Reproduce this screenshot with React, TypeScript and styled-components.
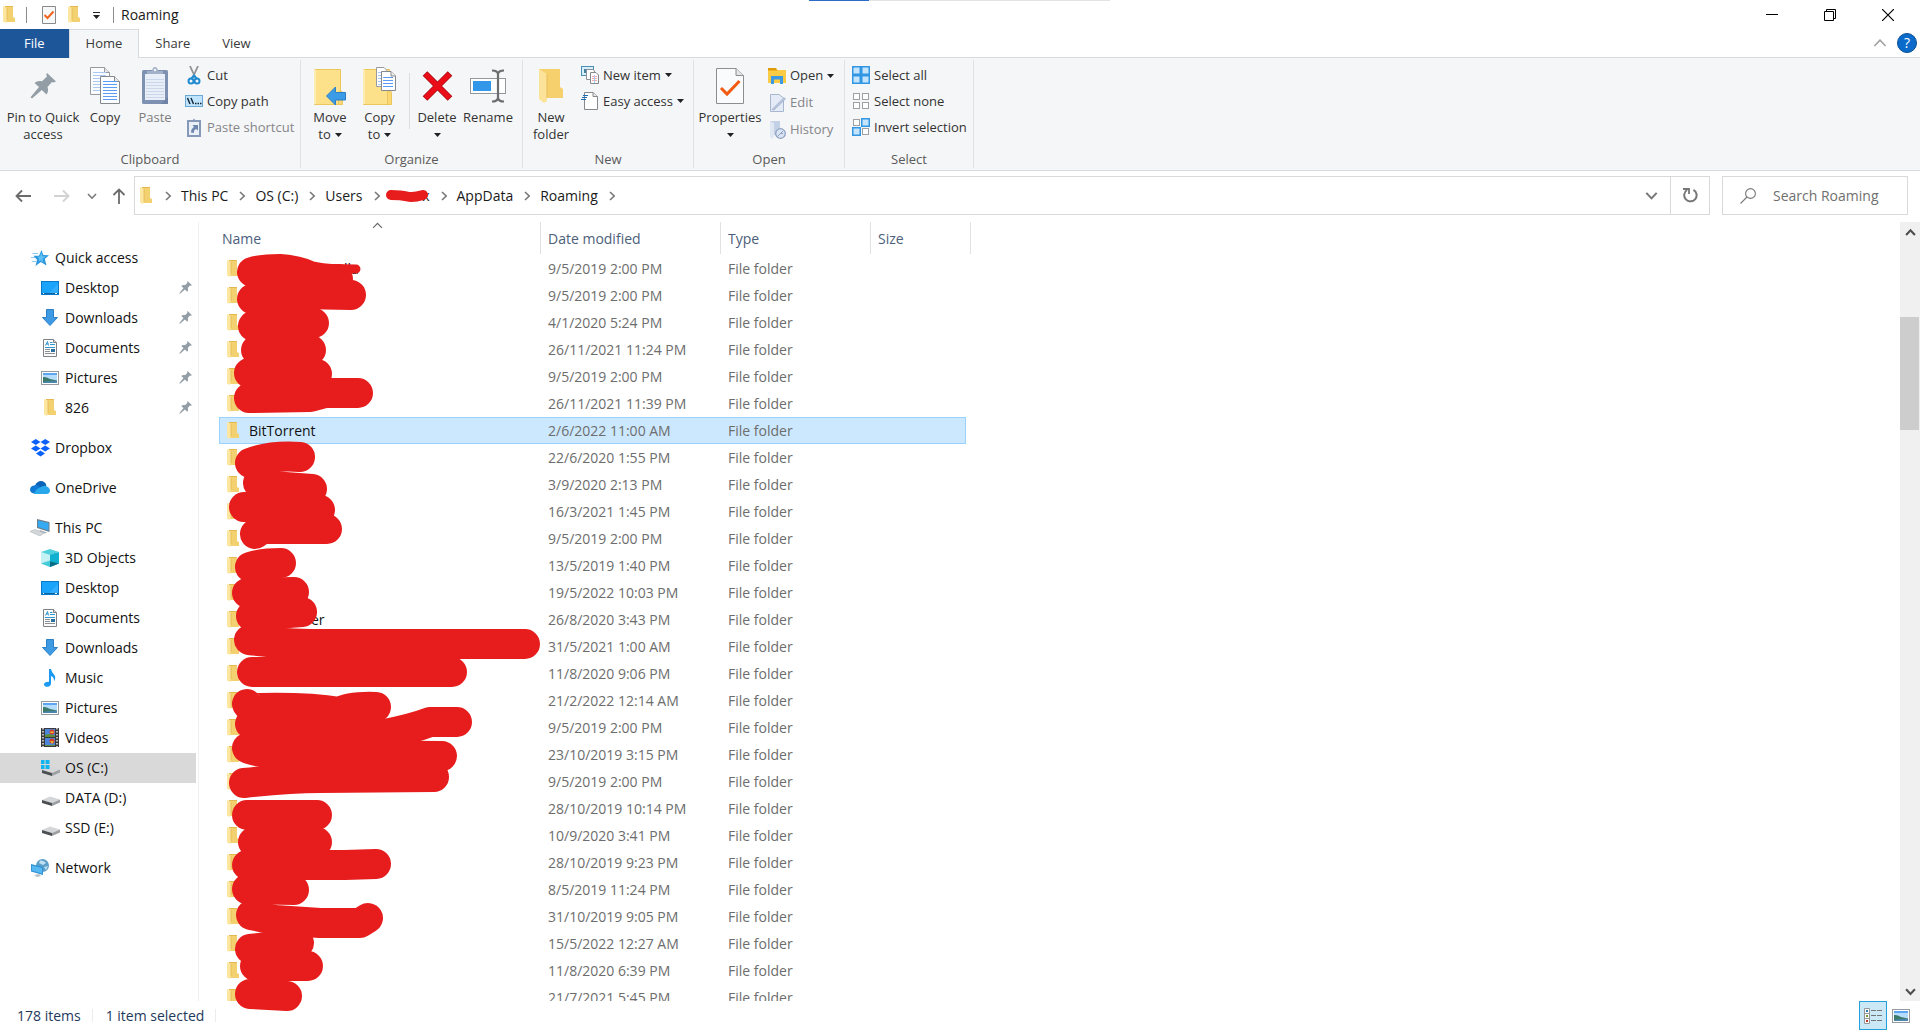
import React from "react";
import styled, { createGlobalStyle, css } from "styled-components";

const GlobalStyle = createGlobalStyle`
  *, *::before, *::after { box-sizing: border-box; }
  body { margin: 0; background: #fff; }
  button, input { font: inherit; color: inherit; }
`;

/* ---------- icons ---------- */

type IconProps = { w?: number; h?: number };

const FolderSmall = () => (
  <svg width="12" height="17" viewBox="0 0 12 17" aria-hidden="true">
    <path d="M2 0H10V11L12 12V16H2Z" fill="#f3d070" />
    <path d="M2 0H10V1H2Z" fill="#e3b84f" />
    <path d="M0 0L4 2V14L2.5 17L0 15.5Z" fill="#fde6a0" />
    <path d="M4 2V14" stroke="#d9ae45" strokeWidth=".6" />
  </svg>
);

const PropsSmall = () => (
  <svg width="14" height="18" viewBox="0 0 14 18" aria-hidden="true">
    <path d="M.5.5H13.5V17.5H.5Z" fill="#f7f8f9" stroke="#8a8a8a" />
    <path d="M2.500 9L5.500 12L11.500 5.500" fill="none" stroke="#f0641e" strokeWidth="2" />
  </svg>
);

const Triangle = ({ w = 7, h = 4 }: IconProps) => (
  <svg width={w} height={h} viewBox="0 0 7 4" aria-hidden="true">
    <path d="M0 0H7L3.5 4Z" fill="#222" />
  </svg>
);

const Chevron = ({ dir, size = 10, color = "#777", weight = 1.6 }: { dir: "up" | "down" | "right"; size?: number; color?: string; weight?: number }) => {
  const d = { up: "M1 7.2L5 3L9 7.2", down: "M1 3L5 7.2L9 3", right: "M3 1L7.2 5L3 9" }[dir];
  return (
    <svg width={size} height={size} viewBox="0 0 10 10" aria-hidden="true">
      <path d={d} fill="none" stroke={color} strokeWidth={weight} />
    </svg>
  );
};

const Pin = ({ w = 26, h = 26 }: IconProps) => (
  <svg width={w} height={h} viewBox="0 0 26 26" aria-hidden="true">
    <path d="M17 0L26 8.500L23.500 9.500L22 9L17.500 14C18.500 16.500 18.200 19.500 16.500 21.500L11.800 17L2 25.500L.5 24.300L9 14L4.500 10C6.500 8 9.500 7.500 12 8.300L17 3.500L16.200 1.800Z" fill="#929da5" />
  </svg>
);

const TextLines = ({ x, y, n, w, color }: { x: number; y: number; n: number; w: number; color: string }) => (
  <>
    {Array.from({ length: n }, (_, i) => (
      <path key={i} d={`M${x} ${y + i * 3}h${w}`} stroke={color} />
    ))}
  </>
);

const CopyIcon = () => (
  <svg width="30" height="37" viewBox="0 0 30 37" aria-hidden="true">
    <path d="M.5.5H14.500L19.500 5.500V27.500H.5Z" fill="#fbfcfe" stroke="#959a9f" />
    <path d="M14.500.5V5.500H19.500" fill="#e8e8e8" stroke="#959a9f" />
    <TextLines x={3} y={5.5} n={7} w={13} color="#a9c8f5" />
    <path d="M10.500 9.500H24.500L29.500 14.500V36.500H10.500Z" fill="#fbfcfe" stroke="#85898d" />
    <path d="M24.500 9.500V14.500H29.500" fill="#e8e8e8" stroke="#85898d" />
    <TextLines x={13} y={14.5} n={7} w={14} color="#5b9bf3" />
  </svg>
);

const PasteIcon = () => (
  <svg width="26" height="37" viewBox="0 0 26 37" aria-hidden="true">
    <rect y="3" width="26" height="34" rx="1.500" fill="#7f91b2" />
    <rect x="3" y="7" width="20" height="26" fill="#e9eff9" />
    <TextLines x={4} y={12.5} n={7} w={18} color="#cbd7e8" />
    <path d="M5 7V4H10Q10.500 0 13 0Q15.500 0 16 4H21V7Z" fill="#a4b2c9" />
    <circle cx="13" cy="3" r="1.200" fill="#f5f6f7" />
    <path d="M19 37L26 30V37Z" fill="#6f82a5" />
  </svg>
);

const ScissorsIcon = () => (
  <svg width="18" height="19" viewBox="0 0 18 19" aria-hidden="true">
    <path d="M5 0L10.500 12M13 0L7.500 12" stroke="#8d9297" strokeWidth="1.800" />
    <circle cx="6" cy="15" r="2.500" fill="none" stroke="#1f8bd0" strokeWidth="2" />
    <circle cx="12" cy="15" r="2.500" fill="none" stroke="#1f8bd0" strokeWidth="2" />
    <path d="M6 13L9 9.500L12 13" fill="none" stroke="#1f8bd0" strokeWidth="2" />
  </svg>
);

const CopyPathIcon = () => (
  <svg width="18" height="12" viewBox="0 0 18 12" aria-hidden="true">
    <rect x=".5" y=".5" width="17" height="11" fill="#bfe4fb" stroke="#6ba9d4" />
    <path d="M2.500 3L5 9M6 3L8.500 9" stroke="#152433" strokeWidth="1.400" />
    <path d="M10 8.500h1.500M12.500 8.500h1.500M15 8.500h1.500" stroke="#152433" strokeWidth="1.300" />
  </svg>
);

const PasteShortcutIcon = () => (
  <svg width="14" height="19" viewBox="0 0 14 19" aria-hidden="true">
    <rect x="1" y="3" width="12" height="15" fill="#eaf0f8" stroke="#8799b8" strokeWidth="2" />
    <path d="M4 4V2H6Q7 -.5 8 2H10V4Z" fill="#8799b8" />
    <path d="M4 14.500Q4 10.500 7 9L5.500 7H11V12.500L9 11Q6.500 12 7 15Z" fill="#6f87ae" />
  </svg>
);

const BigFolder = ({ children, w }: { children?: React.ReactNode; w: number }) => (
  <svg width={w} height="38" viewBox={`0 0 ${w} 38`} aria-hidden="true">
    <path d="M.5 2.500H26.500V37.500H.5Z" fill="#fce08a" stroke="#ebc65c" />
    <path d="M1 2.500V37" stroke="#fdebb2" strokeWidth="2" />
    <path d="M24.500 37V26Q24.500 24 26.500 24Q28.500 24 28.500 26V37.500H20" fill="#fbd873" stroke="#ebc65c" />
    {children}
  </svg>
);

const MoveIcon = () => (
  <BigFolder w={32}>
    <path d="M12.500 29L21.500 20V25.500H31.500V33H21.500V38Z" fill="#3c9be6" stroke="#2a7fc6" />
  </BigFolder>
);

const CopyToIcon = () => (
  <BigFolder w={33}>
    <path d="M13.500.5H21L25 4.500V19.500H13.500Z" fill="#fff" stroke="#959a9f" />
    <TextLines x={15} y={5.5} n={5} w={5} color="#a9c8f5" />
    <path d="M18.500 4.500H28L32.500 9V23.500H18.500Z" fill="#fff" stroke="#85898d" />
    <path d="M28 4.500V9H32.500" fill="#eee" stroke="#85898d" />
    <TextLines x={20} y={10.5} n={4} w={10} color="#5b9bf3" />
  </BigFolder>
);

const DeleteIcon = () => (
  <svg width="31" height="32" viewBox="0 0 31 32" aria-hidden="true">
    <path d="M3 3.500L28 28.500M28 3.500L3 28.500" stroke="#a80c14" strokeWidth="6.500" />
    <path d="M3.500 4L27.500 28M27.500 4L3.500 28" stroke="#ea0d18" strokeWidth="5" />
  </svg>
);

const RenameIcon = () => (
  <svg width="36" height="34" viewBox="0 0 36 34" aria-hidden="true">
    <rect x=".5" y="9.500" width="35" height="15" fill="#fff" stroke="#94989c" />
    <rect x="3" y="12" width="18" height="10" fill="#3297e8" />
    <path d="M22 1.500Q27.500 1.500 28 5Q28.500 1.500 34 1.500M22 32.500Q27.500 32.500 28 29Q28.500 32.500 34 32.500M28 4V30" fill="none" stroke="#6d6d6d" strokeWidth="2.200" />
  </svg>
);

const NewFolderIcon = () => (
  <svg width="25" height="36" viewBox="0 0 25 36" aria-hidden="true">
    <path d="M0 1H21V19L24 21V30H7Z" fill="#f5d06c" />
    <path d="M0 1L8 6V33L5 35L0 31Z" fill="#fde39a" />
    <path d="M8 6V30" stroke="#e7bd55" />
  </svg>
);

const NewItemIcon = () => (
  <svg width="18" height="18" viewBox="0 0 18 18" aria-hidden="true">
    <rect x=".5" y=".5" width="12" height="9" fill="#d6effb" stroke="#4c8db5" />
    <path d="M3 7V3H6V7Z" fill="#46809f" />
    <path d="M5.500 3.500H12L13.500 5V13.500H5.500Z" fill="#fff" stroke="#8d9195" />
    <path d="M9.500 6.500H15L17.500 9V17.500H9.500Z" fill="#fff" stroke="#85898d" />
    <path d="M11 10.500H16M11 12.500H16M11 14.500H16" stroke="#f0a9a5" />
    <path d="M13.500 9V17" stroke="#a9c8f5" />
  </svg>
);

const EasyAccessIcon = () => (
  <svg width="18" height="18" viewBox="0 0 18 18" aria-hidden="true">
    <path d="M3.500.5H12L16.500 4.500V17.500H3.500Z" fill="#fff" stroke="#85898d" />
    <path d="M12 .5V4.500H16.500" fill="#e8e8e8" stroke="#85898d" />
    <path d="M2 3.500H7M1 5.500H6M0 7.500H5" stroke="#1b6fb5" />
  </svg>
);

const PropertiesIcon = () => (
  <svg width="28" height="36" viewBox="0 0 28 36" aria-hidden="true">
    <path d="M.5.5H20L27.500 7.500V35.500H.5Z" fill="#fafbfc" stroke="#8b8f93" />
    <path d="M20 .5V7.500H27.500" fill="#e2e4e6" stroke="#8b8f93" />
    <path d="M5 20L11 26L23.500 13" fill="none" stroke="#f35b12" strokeWidth="3" />
  </svg>
);

const OpenIcon = () => (
  <svg width="18" height="16" viewBox="0 0 18 16" aria-hidden="true">
    <path d="M0 0H8L9.500 2H18V15H0Z" fill="#fccb45" />
    <path d="M0 0H8L9 2.500H0Z" fill="#e19b09" />
    <path d="M3 16V8H15V16H12V11.500H6V16Z" fill="#3c99e4" />
  </svg>
);

const EditIcon = () => (
  <svg width="18" height="18" viewBox="0 0 18 18" aria-hidden="true">
    <path d="M2.500.5H11L15.500 4V17.500H2.500Z" fill="#e4ebf6" stroke="#a8b6cf" />
    <path d="M4 15.500L16 3.500L17.500 5L6 16Z" fill="#b9c6dd" stroke="#93a5c6" strokeWidth=".6" />
  </svg>
);

const HistoryIcon = () => (
  <svg width="18" height="18" viewBox="0 0 18 18" aria-hidden="true">
    <path d="M2 0H12V14H2Z" fill="#c3d0e5" />
    <path d="M2 0L6 2V15L4.500 18L2 16Z" fill="#dfe7f3" />
    <circle cx="12.500" cy="12.500" r="4.800" fill="#dbe4f2" stroke="#8fa2c5" strokeWidth="1.300" />
    <path d="M9.500 15.500L15 10M12.500 12.500H15" stroke="#8fa2c5" />
  </svg>
);

const SelectGrid = ({ on }: { on: [boolean, boolean, boolean, boolean] }) => {
  const all = on.every(Boolean);
  return (
    <svg width="18" height="18" viewBox="0 0 18 18" aria-hidden="true">
      {all && <path d="M0 0H18V18H0Z" fill="#3296e3" />}
      {on.map((sel, i) => {
        const x = (i % 2) * 9;
        const y = Math.floor(i / 2) * 9;
        if (sel) {
          return <rect key={i} x={x + 0.75} y={y + 0.75} width="7.500" height="7.500" fill="#c3e4fc" stroke="#3296e3" strokeWidth="1.500" />;
        }
        return <rect key={i} x={x + 1.5} y={y + 1.5} width="6" height="6" fill="#fff" stroke="#9da1a5" />;
      })}
    </svg>
  );
};

const QuickAccessIcon = () => (
  <svg width="18" height="16" viewBox="0 0 18 16" aria-hidden="true">
    <path d="M10.500 0L12.300 5L18 5.200L13.800 9L15.500 15.500L9.800 12L4.500 16L6 9.700L2.500 5.800H8Z" fill="#2b97dd" />
    <path d="M10.300 2L11.500 6.200L15 6.500L11.500 9L12.500 12.500L9.500 10.500L7.500 11.500L8 8.500L6 6.800L9 6.500Z" fill="#5fc0f6" />
    <path d="M1.500 3.500H7M0 7.500H4M1 11.500H5" stroke="#8cc8ef" />
  </svg>
);

const DesktopIcon = () => (
  <svg width="18" height="14" viewBox="0 0 18 14" aria-hidden="true">
    <rect x=".5" y=".5" width="17" height="13" fill="#19a3fb" stroke="#0b79c8" />
    <path d="M8 12L17 3V12Z" fill="#33aefc" />
    <path d="M1 12.500H17" stroke="#0c65a6" />
    <path d="M2 12.500H3M14 12.500H16" stroke="#fff" />
  </svg>
);

const DownloadsIcon = () => (
  <svg width="16" height="17" viewBox="0 0 16 17" aria-hidden="true">
    <path d="M4.500.5H11.500V8.500H15.500L8 16.500L.5 8.500H4.500Z" fill="#3f9ae4" stroke="#2b7fc7" />
  </svg>
);

const DocumentsIcon = () => (
  <svg width="14" height="18" viewBox="0 0 14 18" aria-hidden="true">
    <path d="M.5.5H10.500L13.500 3.500V17.500H.5Z" fill="#fcfcfc" stroke="#7e8286" />
    <path d="M10.500.5V3.500H13.500" fill="#ddd" stroke="#7e8286" />
    <path d="M2.500 6.500L4.500 2.500L5.500 6.500M3 5H5M7 3.500H9.500M7 5.500H12M2 8.500H12" fill="none" stroke="#2f95cf" />
    <path d="M2 10.500H7M2 12.500H7M2 14.500H12" stroke="#8a8f94" />
    <rect x="8" y="10" width="4" height="3" fill="#2a6f9d" />
  </svg>
);

const PicturesIcon = () => (
  <svg width="18" height="14" viewBox="0 0 18 14" aria-hidden="true">
    <rect x=".5" y=".5" width="17" height="13" fill="#fff" stroke="#969a9e" />
    <rect x="2" y="2" width="14" height="10" fill="#b5dcfb" />
    <path d="M2 2H16V4H2Z" fill="#5da4f3" />
    <path d="M2 6Q5 5.500 9 8L16 9.500V12H2Z" fill="#3e7a6c" />
    <path d="M2 11Q9 9.500 16 10V12H2Z" fill="#4a86ad" />
  </svg>
);

const DropboxIcon = () => (
  <svg width="19" height="18" viewBox="0 0 19 18" aria-hidden="true">
    <path d="M4.800 0L9.500 3L4.800 6L0 3ZM14.200 0L19 3L14.200 6L9.500 3ZM4.800 6.500L9.500 9.500L4.800 12.500L0 9.500ZM14.200 6.500L19 9.500L14.200 12.500L9.500 9.500ZM9.500 11.500L14 14.500L9.500 17.500L5 14.500Z" fill="#0b62fb" />
  </svg>
);

const OneDriveIcon = () => (
  <svg width="20" height="13" viewBox="0 0 20 13" aria-hidden="true">
    <path d="M5 4.500Q7 0 11 0Q15 0 16.500 4.500L10 9Z" fill="#0b63b8" />
    <path d="M4 12.500Q0 12 0 8.500Q.3 4.500 5 4.200Q7.500 3.500 10 6L14 9L6 12.500Z" fill="#0f79d3" />
    <path d="M4 12.800Q6 7.500 10 6.500Q14 3.500 17 5.500Q20 7 20 10Q19.500 13 16.500 13H4Z" fill="#28a8ea" />
  </svg>
);

const ThisPcIcon = () => (
  <svg width="20" height="17" viewBox="0 0 20 17" aria-hidden="true">
    <path d="M7 0L19.500 3V13L7 9Z" fill="#6e7f8c" />
    <path d="M8 1.500L18.500 4V11.500L8 8Z" fill="#35aaf2" />
    <path d="M10 11L17 13.500L15 14.500L9 12.500Z" fill="#a7b0b7" />
    <path d="M0 12.500L5 10.500L14 14L10 17Z" fill="#d3d7da" stroke="#adb3b8" strokeWidth=".6" />
  </svg>
);

const ObjectsIcon = () => (
  <svg width="18" height="18" viewBox="0 0 18 18" aria-hidden="true">
    <path d="M0 3L9 6V18L0 14.500Z" fill="#c4f1f3" />
    <path d="M0 14.500L9 11.500V18Z" fill="#45cbd8" />
    <path d="M9 5L18 3V14.500L9 18Z" fill="#12b0d0" />
    <path d="M9 0L18 3L9 6L0 3Z" fill="#4fd0dc" />
    <path d="M9 12.500L18 14.500L9 18Z" fill="#0a6c86" />
  </svg>
);

const MusicIcon = () => (
  <svg width="12" height="18" viewBox="0 0 12 18" aria-hidden="true">
    <path d="M5 0H7Q7.500 3 10 5.500Q12.500 8.500 10 12.500Q10.500 8.500 7 7V14.500Q6.800 17.500 3.500 17.800Q.3 17.800 0 15.500Q.3 12.500 5 12.800Z" fill="#1a9af2" />
  </svg>
);

const VideosIcon = () => (
  <svg width="18" height="19" viewBox="0 0 18 19" aria-hidden="true">
    <rect width="18" height="19" fill="#3a3a3c" />
    <path d="M2 0V19M16 0V19" stroke="#e8e8e8" strokeWidth="1.500" strokeDasharray="1.500 1.500" />
    <rect x="4" y="1" width="10" height="8" fill="#4b85dc" />
    <rect x="4" y="10" width="10" height="8" fill="#4b85dc" />
    <circle cx="11" cy="4" r="2.500" fill="#d83b27" />
    <path d="M9.500 3.500H12.500V5H9.500Z" fill="#f1c232" />
    <path d="M4 7L8 6L14 7.500V9H4ZM4 17H14V18H4Z" fill="#5f8c36" />
    <circle cx="11" cy="13" r="2.500" fill="#d83b27" />
    <path d="M9 13H13L11 16Z" fill="#e3b52b" />
  </svg>
);

const DriveIcon = ({ system }: { system?: boolean }) => (
  <svg width="19" height="16" viewBox="0 0 19 16" aria-hidden="true">
    <path d="M1 10L9 6.500L19 9.500L11 13Z" fill="#d4d6d8" />
    <path d="M1 10L11 13V16L1 13Z" fill="#4c4f52" />
    <path d="M11 13L19 9.500V12.500L11 16Z" fill="#9da0a3" />
    {system && <path d="M0 0H3.500V4H0ZM4.500 0H8.500V4H4.500ZM0 5H3.500V9H0ZM4.500 5H8.500V9H4.500Z" fill="#10b4ef" />}
  </svg>
);

const NetworkIcon = () => (
  <svg width="18" height="18" viewBox="0 0 18 18" aria-hidden="true">
    <circle cx="11.500" cy="6.500" r="6.500" fill="#5b9fc9" />
    <path d="M9 1.500Q13 1 15 4L12 6L8 4ZM13 8L17 7L15 11Z" fill="#bfe0f1" />
    <path d="M0 5L12 8V16L0 12.500Z" fill="#2f93d6" />
    <path d="M1 6.500L11 9V14.500L1 11.500Z" fill="#56b7f1" />
    <path d="M3 16L8 15L10 17L6 18Z" fill="#b9c0c5" />
  </svg>
);

const DetailsViewIcon = () => (
  <svg width="18" height="16" viewBox="0 0 18 16" aria-hidden="true">
    <path d="M.5.500H5.500V15.500H.5ZM.5 5.500H5.500M.5 10.500H5.500" fill="#fff" stroke="#969696" />
    <path d="M2 3H4" stroke="#2d7db3" strokeWidth="2" />
    <path d="M2 8H4" stroke="#7a9a2b" strokeWidth="2" />
    <path d="M2 13H4" stroke="#c03527" strokeWidth="2" />
    <path d="M7 2.500H12M13 2.500H18M7 7.500H12M13 7.500H18M7 12.500H12M13 12.500H18" stroke="#757575" />
  </svg>
);

const Arrow = ({ dir, color }: { dir: "left" | "right" | "up"; color: string }) => {
  const d = {
    left: "M1 8H16M7 2.500L1.500 8L7 13.500",
    right: "M0 8H15M9 2.500L14.500 8L9 13.500",
    up: "M8 1.500V16M2.500 7L8 1.500L13.500 7",
  }[dir];
  return (
    <svg width="16" height="16" viewBox="0 0 16 16" aria-hidden="true">
      <path d={d} fill="none" stroke={color} strokeWidth="1.800" />
    </svg>
  );
};

/* ---------- window frame ---------- */

const Window = styled.div`
  display: flex;
  flex-direction: column;
  height: 100vh;
  overflow: hidden;
  background: #fff;
  color: #1a1a1a;
  font-family: "Open Sans", "Noto Sans", sans-serif;
  font-size: 14px;
  line-height: 20px;
`;

const PlainButton = styled.button`
  display: flex;
  align-items: center;
  justify-content: center;
  padding: 0;
  border: 0;
  background: none;
`;

const TitleBar = styled.header`
  position: relative;
  display: flex;
  align-items: center;
  height: 29px;
  padding-left: 3px;
`;

const TopTrack = styled.div`
  position: absolute;
  top: 0;
  left: calc(50% - 151px);
  width: 301px;
  height: 1px;
  background: linear-gradient(90deg, #2b6cc9 60px, #e3e3e3 60px);
`;

const TitleDivider = styled.span`
  width: 1px;
  height: 16px;
  background: #8c8c8c;
`;

const QuickTools = styled.div`
  display: flex;
  align-items: center;
  gap: 12px;
  padding: 0 13px 0 15px;
`;

const LeadIcon = styled.span`
  display: flex;
  padding-right: 11px;
`;

const Title = styled.h1`
  margin: 0;
  padding-left: 7px;
  font-size: 14px;
  font-weight: 400;
`;

const Customize = styled(PlainButton)`
  flex-direction: column;
  gap: 2px;
  width: 8px;
  padding-top: 2px;
  &::before { content: ""; width: 7px; height: 1px; background: #222; }
`;

const WindowControls = styled.div`
  display: flex;
  margin-left: auto;
  padding-right: 3px;
`;

const WindowButton = styled(PlainButton)`
  width: 58px;
  height: 28px;
`;

const TabBar = styled.div`
  display: flex;
  height: 29px;
  border-bottom: 1px solid #dadbdc;
`;

const Tab = styled.button<{ $kind?: "file" | "active" }>`
  height: 29px;
  padding: 0 15px 2px;
  border: 1px solid transparent;
  border-bottom: 0;
  background: transparent;
  color: #3a3a3a;
  font-size: 13px;
  ${({ $kind }) => $kind === "file" && css`
    padding: 0 23px 2px;
    background: #1e5799;
    color: #fff;
  `}
  ${({ $kind }) => $kind === "active" && css`
    padding: 0 16px 2px;
    border-color: #dadbdc;
    background: #f5f6f7;
  `}
`;

const TabTools = styled.div`
  display: flex;
  align-items: center;
  gap: 10px;
  margin-left: auto;
  padding-right: 3px;
`;

const HelpButton = styled(PlainButton)`
  width: 20px;
  height: 20px;
  border: 1px solid #0b4f94;
  border-radius: 50%;
  background: #0a6bcb;
  color: #fff;
`;

/* ---------- ribbon ---------- */

const Ribbon = styled.div`
  display: flex;
  height: 113px;
  padding: 2px 0;
  border-bottom: 1px solid #dadbdc;
  background: #f5f6f7;
  font-size: 13px;
  line-height: 17px;
`;

const Group = styled.section<{ $w: number }>`
  display: flex;
  flex-direction: column;
  justify-content: space-between;
  width: ${({ $w }) => $w}px;
  border-right: 1px solid #e1e2e3;
`;

const GroupBody = styled.div`
  display: flex;
  padding: 2px 0 0 4px;
`;

const GroupLabel = styled.h2`
  margin: 0;
  color: #5a5a5a;
  font-size: 13px;
  font-weight: 400;
  text-align: center;
`;

const Tall = styled.button<{ $w: number; $off?: boolean }>`
  display: flex;
  flex-direction: column;
  align-items: center;
  width: ${({ $w }) => $w}px;
  padding: 0;
  border: 0;
  background: none;
  color: ${({ $off }) => ($off ? "#7d7d7d" : "#333")};
  white-space: nowrap;
`;

const TallIcon = styled.span`
  display: flex;
  align-items: center;
  justify-content: center;
  height: 47px;
`;

const ArrowLine = styled.span`
  display: flex;
  align-items: center;
  justify-content: center;
  gap: 4px;
  min-height: 17px;
`;

const Stack = styled.div<{ $pitch?: number; $lead?: number }>`
  display: flex;
  flex-direction: column;
  padding-left: ${({ $lead = 6 }) => $lead}px;
  --pitch: ${({ $pitch = 26 }) => $pitch}px;
`;

const Short = styled.button<{ $off?: boolean }>`
  display: flex;
  align-items: center;
  gap: 4px;
  height: var(--pitch);
  padding: 0;
  border: 0;
  background: none;
  color: ${({ $off }) => ($off ? "#85858a" : "#333")};
  white-space: nowrap;
`;

const ShortIcon = styled.span`
  display: flex;
  justify-content: center;
  width: 18px;
`;

const InnerDivider = styled.span`
  width: 1px;
  height: 56px;
  margin: 11px 0 0 5px;
  background: #dcdddf;
`;

type TallSpec = { icon: React.ReactNode; lines: string[]; w: number; off?: boolean; menu?: boolean };

const TallButton = ({ icon, lines, w, off, menu }: TallSpec) => (
  <Tall $w={w} $off={off} disabled={off}>
    <TallIcon>{icon}</TallIcon>
    <span>{lines[0]}</span>
    <ArrowLine>
      {lines[1]}
      {menu && <Triangle />}
    </ArrowLine>
  </Tall>
);

type ShortSpec = { icon: React.ReactNode; label: string; off?: boolean; menu?: boolean };

const ShortButton = ({ icon, label, off, menu }: ShortSpec) => (
  <Short $off={off} disabled={off}>
    <ShortIcon>{icon}</ShortIcon>
    {label}
    {menu && <Triangle />}
  </Short>
);

/* ---------- address row ---------- */

const AddressRow = styled.div`
  display: flex;
  align-items: center;
  height: 51px;
  padding: 0 12px 2px 15px;
`;

const NavButtons = styled.div`
  display: flex;
  align-items: center;
  width: 119px;
`;

const NavButton = styled(PlainButton)<{ $gap: number }>`
  margin-right: ${({ $gap }) => $gap}px;
`;

const AddressBox = styled.nav`
  display: flex;
  flex: 1;
  align-items: center;
  height: 39px;
  padding-left: 5px;
  border: 1px solid #d9d9d9;
`;

const Crumbs = styled.ol`
  display: flex;
  flex: 1;
  align-items: center;
  margin: 0;
  padding: 0 0 0 11px;
  list-style: none;
`;

const Crumb = styled.li`
  display: flex;
  align-items: center;
  gap: 9px;
  padding-right: 8px;
  a { color: #1a1a1a; text-decoration: none; }
`;

const HiddenCrumb = styled.span`
  position: relative;
  display: block;
  width: 40px;
  text-align: right;
  svg { position: absolute; left: -5px; top: 3px; }
`;

const BoxButton = styled(PlainButton)<{ $w: number; $edge?: boolean }>`
  align-self: stretch;
  width: ${({ $w }) => $w}px;
  border-left: ${({ $edge }) => ($edge ? "1px solid #d9d9d9" : "0")};
`;

const SearchBox = styled.label`
  display: flex;
  align-items: center;
  gap: 17px;
  width: 186px;
  height: 39px;
  margin-left: 12px;
  padding-left: 17px;
  border: 1px solid #d9d9d9;
`;

const SearchInput = styled.input`
  min-width: 0;
  flex: 1;
  padding: 0;
  border: 0;
  outline: 0;
  background: transparent;
  &::placeholder { color: #6f6f6f; opacity: 1; }
`;

/* ---------- sidebar ---------- */

const Content = styled.main`
  position: relative;
  display: flex;
  flex: 1;
  min-height: 0;
`;

const Sidebar = styled.nav`
  width: 199px;
  padding: 21px 2px 0 0;
  border-right: 1px solid #f0f0f0;
  color: #111;
`;

const Tree = styled.ul`
  margin: 0 0 10px;
  padding: 0;
  list-style: none;
`;

const TreeItem = styled.li<{ $child?: boolean; $selected?: boolean }>`
  display: flex;
  align-items: center;
  gap: 5px;
  height: 30px;
  padding: 0 4px 1px ${({ $child }) => ($child ? 40 : 30)}px;
  background: ${({ $selected }) => ($selected ? "#d9d9d9" : "transparent")};
  a { flex: 1; color: inherit; text-decoration: none; }
`;

const TreeIcon = styled.span`
  display: flex;
  justify-content: center;
  width: 20px;
`;

/* ---------- file list ---------- */

const FilePane = styled.div`
  flex: 1;
  min-width: 0;
  overflow: hidden;
  padding-left: 20px;
`;

const Table = styled.table`
  display: block;
  width: 752px;
  color: #6d6d6d;
`;

const columns = css`
  display: grid;
  grid-template-columns: 322px 180px 150px 1fr;
`;

const Head = styled.thead`
  display: block;
  padding-bottom: 1px;
  color: #4c607a;
`;

const HeadRow = styled.tr`
  ${columns}
`;

const HeadCell = styled.th<{ $first?: boolean }>`
  position: relative;
  height: 32px;
  padding: 7px 0 0 ${({ $first }) => ($first ? 3 : 7)}px;
  border-right: 1px solid #e1e1e1;
  font-weight: 400;
  text-align: left;
`;

const SortMark = styled.span`
  position: absolute;
  top: -2px;
  left: 50%;
  margin-left: -8px;
  display: flex;
`;

const Body = styled.tbody`
  display: block;
  padding-right: 5px;
`;

const Row = styled.tr<{ $selected?: boolean }>`
  ${columns}
  height: 27px;
  ${({ $selected }) => $selected && css`
    background: #cce8ff;
    box-shadow: inset 0 0 0 1px #99d1ff;
  `}
`;

const Cell = styled.td`
  padding: 4px 0 3px 7px;
`;

const NameCell = styled.td`
  display: flex;
  align-items: center;
  gap: 10px;
  padding: 0 0 0 8px;
  color: #111;
`;

const Covered = styled.span<{ $w: number }>`
  display: block;
  padding-left: ${({ $w }) => $w}px;
`;

const Scribbles = styled.svg`
  position: absolute;
  top: 0;
  left: 0;
  overflow: visible;
  pointer-events: none;
`;

const ScrollBar = styled.div`
  display: flex;
  flex-direction: column;
  width: 20px;
  background: #f0f0f0;
`;

const ScrollTrack = styled.div`
  flex: 1;
  padding: 75px 1px 0 0;
`;

const ScrollThumb = styled.div`
  height: 113px;
  background: #cdcdcd;
`;

const ScrollButton = styled(PlainButton)`
  height: 20px;
`;

/* ---------- status bar ---------- */

const StatusBar = styled.footer`
  display: flex;
  align-items: center;
  height: 29px;
  padding-left: 17px;
  color: #1e395b;
`;

const StatusItem = styled.span`
  display: flex;
  align-items: center;
  gap: 11px;
  margin-right: 13px;
  &::after { content: ""; width: 1px; height: 13px; background: #ececec; }
`;

const ViewButtons = styled.div`
  display: flex;
  align-self: stretch;
  margin-left: auto;
  padding-right: 5px;
`;

const ViewButton = styled(PlainButton)<{ $on?: boolean }>`
  width: 28px;
  border: 1px solid ${({ $on }) => ($on ? "#26a0da" : "transparent")};
  background: ${({ $on }) => ($on ? "#cbe8f6" : "transparent")};
`;

/* ---------- data ---------- */

type Entry = { label: string; icon: React.ReactNode; pinned?: boolean; selected?: boolean };

const trees: { root: Entry; items: Entry[] }[] = [
  {
    root: { label: "Quick access", icon: <QuickAccessIcon /> },
    items: [
      { label: "Desktop", icon: <DesktopIcon />, pinned: true },
      { label: "Downloads", icon: <DownloadsIcon />, pinned: true },
      { label: "Documents", icon: <DocumentsIcon />, pinned: true },
      { label: "Pictures", icon: <PicturesIcon />, pinned: true },
      { label: "826", icon: <FolderSmall />, pinned: true },
    ],
  },
  { root: { label: "Dropbox", icon: <DropboxIcon /> }, items: [] },
  { root: { label: "OneDrive", icon: <OneDriveIcon /> }, items: [] },
  {
    root: { label: "This PC", icon: <ThisPcIcon /> },
    items: [
      { label: "3D Objects", icon: <ObjectsIcon /> },
      { label: "Desktop", icon: <DesktopIcon /> },
      { label: "Documents", icon: <DocumentsIcon /> },
      { label: "Downloads", icon: <DownloadsIcon /> },
      { label: "Music", icon: <MusicIcon /> },
      { label: "Pictures", icon: <PicturesIcon /> },
      { label: "Videos", icon: <VideosIcon /> },
      { label: "OS (C:)", icon: <DriveIcon system />, selected: true },
      { label: "DATA (D:)", icon: <DriveIcon /> },
      { label: "SSD (E:)", icon: <DriveIcon /> },
    ],
  },
  { root: { label: "Network", icon: <NetworkIcon /> }, items: [] },
];

type FileRow = { date: string; name?: string; covered?: number };

const files: FileRow[] = [
  { date: "9/5/2019 2:00 PM", name: "lla", covered: 95 },
  { date: "9/5/2019 2:00 PM" },
  { date: "4/1/2020 5:24 PM" },
  { date: "26/11/2021 11:24 PM" },
  { date: "9/5/2019 2:00 PM" },
  { date: "26/11/2021 11:39 PM" },
  { date: "2/6/2022 11:00 AM", name: "BitTorrent" },
  { date: "22/6/2020 1:55 PM" },
  { date: "3/9/2020 2:13 PM" },
  { date: "16/3/2021 1:45 PM" },
  { date: "9/5/2019 2:00 PM" },
  { date: "13/5/2019 1:40 PM" },
  { date: "19/5/2022 10:03 PM" },
  { date: "26/8/2020 3:43 PM", name: "er", covered: 62 },
  { date: "31/5/2021 1:00 AM" },
  { date: "11/8/2020 9:06 PM" },
  { date: "21/2/2022 12:14 AM" },
  { date: "9/5/2019 2:00 PM" },
  { date: "23/10/2019 3:15 PM" },
  { date: "9/5/2019 2:00 PM" },
  { date: "28/10/2019 10:14 PM" },
  { date: "10/9/2020 3:41 PM" },
  { date: "28/10/2019 9:23 PM" },
  { date: "8/5/2019 11:24 PM" },
  { date: "31/10/2019 9:05 PM" },
  { date: "15/5/2022 12:27 AM" },
  { date: "11/8/2020 6:39 PM" },
  { date: "21/7/2021 5:45 PM" },
];

/* Marker strokes that cover the folder names; origin is the window's top left. */
const markerStrokes = [
  "M252 272Q262 269 280 269Q297 270 310 276Q322 279 338 279",
  "M252 299L300 294L351 295",
  "M253 326L280 323L314 323",
  "M256 350L311 350",
  "M249 373L317 374",
  "M249 398L310 397L325 393L358 393",
  "M250 463Q270 455 300 457",
  "M258 483L285 487L312 489",
  "M244 507L320 510",
  "M255 534L262 529L327 529",
  "M250 567Q262 563 281 563",
  "M247 593L294 592",
  "M251 616L302 612",
  "M249 640Q275 643 310 644L525 644",
  "M252 672L452 672",
  "M247 704Q249 708 260 708Q308 707 340 712Q350 706 376 707",
  "M250 724Q300 740 380 735Q412 729 430 722L457 722",
  "M247 748Q255 753 290 755L442 756",
  "M244 783Q290 778 320 778L434 777",
  "M247 815L317 815",
  "M253 842L317 842",
  "M247 865L345 865L376 864",
  "M247 889L294 890",
  "M251 915L275 920L320 923L360 923L368 918",
  "M250 949L299 943",
  "M255 966L308 966",
  "M250 994L287 996",
];

const crumbs = ["This PC", "OS (C:)", "Users", null, "AppData", "Roaming"];

const TreeRow = ({ entry, child }: { entry: Entry; child?: boolean }) => (
  <TreeItem $child={child} $selected={entry.selected}>
    <TreeIcon>{entry.icon}</TreeIcon>
    <a href="#">{entry.label}</a>
    {entry.pinned && <Pin w={13} h={13} />}
  </TreeItem>
);

export default function App() {
  return (
    <Window>
      <GlobalStyle />
      <TitleBar>
        <TopTrack />
        <LeadIcon><FolderSmall /></LeadIcon>
        <TitleDivider />
        <QuickTools>
          <PlainButton aria-label="Properties"><PropsSmall /></PlainButton>
          <PlainButton aria-label="New folder"><FolderSmall /></PlainButton>
          <Customize aria-label="Customize Quick Access Toolbar"><Triangle /></Customize>
        </QuickTools>
        <TitleDivider />
        <Title>Roaming</Title>
        <WindowControls>
          <WindowButton aria-label="Minimize">
            <svg width="12" height="12"><path d="M0 5.500H12" stroke="#000" /></svg>
          </WindowButton>
          <WindowButton aria-label="Restore">
            <svg width="12" height="12"><path d="M.5 2.500H9.500V11.500H.5ZM2.500 2.500V.5H11.500V9.500H9.500" fill="none" stroke="#000" /></svg>
          </WindowButton>
          <WindowButton aria-label="Close">
            <svg width="12" height="12"><path d="M0 0L12 12M12 0L0 12" stroke="#000" strokeWidth="1.200" /></svg>
          </WindowButton>
        </WindowControls>
      </TitleBar>

      <TabBar>
        <Tab $kind="file">File</Tab>
        <Tab $kind="active">Home</Tab>
        <Tab>Share</Tab>
        <Tab>View</Tab>
        <TabTools>
          <PlainButton aria-label="Minimize the Ribbon"><Chevron dir="up" size={14} color="#a0a0a0" weight={1.1} /></PlainButton>
          <HelpButton aria-label="Help">?</HelpButton>
        </TabTools>
      </TabBar>

      <Ribbon>
        <Group $w={301}>
          <GroupBody>
            <TallButton w={78} icon={<Pin />} lines={["Pin to Quick", "access"]} />
            <TallButton w={46} icon={<CopyIcon />} lines={["Copy"]} />
            <TallButton w={54} icon={<PasteIcon />} lines={["Paste"]} off />
            <Stack $lead={3}>
              <ShortButton icon={<ScissorsIcon />} label="Cut" />
              <ShortButton icon={<CopyPathIcon />} label="Copy path" />
              <ShortButton icon={<PasteShortcutIcon />} label="Paste shortcut" off />
            </Stack>
          </GroupBody>
          <GroupLabel>Clipboard</GroupLabel>
        </Group>
        <Group $w={222}>
          <GroupBody>
            <TallButton w={50} icon={<MoveIcon />} lines={["Move", "to"]} menu />
            <TallButton w={49} icon={<CopyToIcon />} lines={["Copy", "to"]} menu />
            <InnerDivider />
            <TallButton w={54} icon={<DeleteIcon />} lines={["Delete"]} menu />
            <TallButton w={48} icon={<RenameIcon />} lines={["Rename"]} />
          </GroupBody>
          <GroupLabel>Organize</GroupLabel>
        </Group>
        <Group $w={171}>
          <GroupBody>
            <TallButton w={48} icon={<NewFolderIcon />} lines={["New", "folder"]} />
            <Stack>
              <ShortButton icon={<NewItemIcon />} label="New item" menu />
              <ShortButton icon={<EasyAccessIcon />} label="Easy access" menu />
            </Stack>
          </GroupBody>
          <GroupLabel>New</GroupLabel>
        </Group>
        <Group $w={151}>
          <GroupBody>
            <TallButton w={64} icon={<PropertiesIcon />} lines={["Properties"]} menu />
            <Stack $pitch={27}>
              <ShortButton icon={<OpenIcon />} label="Open" menu />
              <ShortButton icon={<EditIcon />} label="Edit" off />
              <ShortButton icon={<HistoryIcon />} label="History" off />
            </Stack>
          </GroupBody>
          <GroupLabel>Open</GroupLabel>
        </Group>
        <Group $w={129}>
          <GroupBody>
            <Stack $lead={3}>
              <ShortButton icon={<SelectGrid on={[true, true, true, true]} />} label="Select all" />
              <ShortButton icon={<SelectGrid on={[false, false, false, false]} />} label="Select none" />
              <ShortButton icon={<SelectGrid on={[false, true, true, false]} />} label="Invert selection" />
            </Stack>
          </GroupBody>
          <GroupLabel>Select</GroupLabel>
        </Group>
      </Ribbon>

      <AddressRow>
        <NavButtons>
          <NavButton $gap={23} aria-label="Back"><Arrow dir="left" color="#6b6b6b" /></NavButton>
          <NavButton $gap={17} aria-label="Forward"><Arrow dir="right" color="#d2d2d2" /></NavButton>
          <NavButton $gap={14} aria-label="Recent locations"><Chevron dir="down" size={10} color="#777" /></NavButton>
          <NavButton $gap={0} aria-label="Up"><Arrow dir="up" color="#6b6b6b" /></NavButton>
        </NavButtons>
        <AddressBox aria-label="Address">
          <FolderSmall />
          <Crumbs>
            <Crumb><Chevron dir="right" /></Crumb>
            {crumbs.map((c, i) => (
              <Crumb key={i}>
                {c ? (
                  <a href="#">{c}</a>
                ) : (
                  <HiddenCrumb>
                    x
                    <svg width="46" height="14" aria-hidden="true">
                      <path d="M6 6Q16 6 22 7.500T38 6" fill="none" stroke="#e71d1d" strokeWidth="10" strokeLinecap="round" />
                    </svg>
                  </HiddenCrumb>
                )}
                <Chevron dir="right" />
              </Crumb>
            ))}
          </Crumbs>
          <BoxButton $w={38} aria-label="Previous locations"><Chevron dir="down" size={13} /></BoxButton>
          <BoxButton $w={39} $edge aria-label="Refresh">
            <svg width="15" height="15" viewBox="0 0 15 15"><path d="M10.500 1.800A6.200 6.200 0 1 1 4 2" fill="none" stroke="#777" strokeWidth="2" /><path d="M0 1H6V6" fill="none" stroke="#777" strokeWidth="1.800" /></svg>
          </BoxButton>
        </AddressBox>
        <SearchBox>
          <svg width="16" height="16" viewBox="0 0 16 16" aria-hidden="true"><circle cx="10.500" cy="5.500" r="4.900" fill="none" stroke="#777" strokeWidth="1.100" /><path d="M7 9L.5 15.500" stroke="#777" strokeWidth="1.100" /></svg>
          <SearchInput type="text" placeholder="Search Roaming" aria-label="Search Roaming" />
        </SearchBox>
      </AddressRow>

      <Content>
        <Sidebar aria-label="Folders">
          {trees.map((t) => (
            <Tree key={t.root.label}>
              <TreeRow entry={t.root} />
              {t.items.map((e) => <TreeRow key={e.label} entry={e} child />)}
            </Tree>
          ))}
        </Sidebar>
        <FilePane>
          <Table>
            <Head>
              <HeadRow>
                <HeadCell $first>
                  Name
                  <SortMark><Chevron dir="up" size={11} color="#666" weight={1} /></SortMark>
                </HeadCell>
                <HeadCell>Date modified</HeadCell>
                <HeadCell>Type</HeadCell>
                <HeadCell>Size</HeadCell>
              </HeadRow>
            </Head>
            <Body>
              {files.map((f, i) => (
                <Row key={i} $selected={f.name === "BitTorrent"}>
                  <NameCell>
                    <FolderSmall />
                    {f.name && <Covered $w={f.covered ?? 0}>{f.name}</Covered>}
                  </NameCell>
                  <Cell>{f.date}</Cell>
                  <Cell>File folder</Cell>
                  <Cell />
                </Row>
              ))}
            </Body>
          </Table>
        </FilePane>
        <ScrollBar>
          <ScrollButton aria-label="Scroll up"><Chevron dir="up" size={11} color="#505050" weight={2} /></ScrollButton>
          <ScrollTrack><ScrollThumb /></ScrollTrack>
          <ScrollButton aria-label="Scroll down"><Chevron dir="down" size={11} color="#505050" weight={2} /></ScrollButton>
        </ScrollBar>
        <Scribbles width="560" height="790" viewBox="0 222 560 790" aria-hidden="true">
          <g fill="none" stroke="#e71d1d" strokeWidth="30" strokeLinecap="round" strokeLinejoin="round">
            {markerStrokes.map((d) => <path key={d} d={d} />)}
            <path d="M310 268L356 269" strokeWidth="9" />
          </g>
        </Scribbles>
      </Content>

      <StatusBar>
        <StatusItem>178 items</StatusItem>
        <StatusItem>1 item selected</StatusItem>
        <ViewButtons>
          <ViewButton $on aria-label="Details view"><DetailsViewIcon /></ViewButton>
          <ViewButton aria-label="Large icons view"><PicturesIcon /></ViewButton>
        </ViewButtons>
      </StatusBar>
    </Window>
  );
}
